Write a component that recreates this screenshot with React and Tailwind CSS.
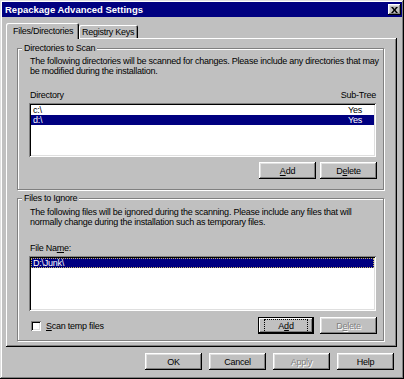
import React from "react";

const raised =
  "shadow-[inset_-1px_-1px_0_#000,inset_1px_1px_0_#fff,inset_-2px_-2px_0_#808080,inset_2px_2px_0_#dfdfdf]";

function Button({ children, disabled, isDefault }) {
  return (
    <div
      className={
        isDefault
          ? "w-[56px] h-[17px] flex items-center justify-center bg-[#c0c0c0] border border-black shadow-[inset_-1px_-1px_0_#000,inset_1px_1px_0_#fff,inset_-2px_-2px_0_#808080]"
          : "w-[57px] h-[17px] flex items-center justify-center bg-[#c0c0c0] shadow-[inset_-1px_-1px_0_#000,inset_1px_1px_0_#fff,inset_-2px_-2px_0_#808080,inset_2px_2px_0_#dfdfdf]"
      }
    >
      <span
        className={
          disabled
            ? "text-[#808080] [text-shadow:1px_1px_0_#fff] leading-[10px]"
            : isDefault
            ? "leading-[10px] outline outline-1 outline-dotted outline-black outline-offset-[1px] px-[12px]"
            : "leading-[10px]"
        }
      >
        {children}
      </span>
    </div>
  );
}

function GroupBox({ label, className, children }) {
  return (
    <div
      className={
        "relative ml-[11px] w-[367px] border border-[#808080] shadow-[inset_1px_1px_0_#fff,1px_1px_0_#fff] pl-[12px] " +
        className
      }
    >
      <span className="absolute -top-[6px] left-[4px] bg-[#c0c0c0] px-[2px] leading-[10px] whitespace-nowrap">{label}</span>
      {children}
    </div>
  );
}

export default function App() {
  return (
    <div className="w-[404px] h-[379px] bg-[#c0c0c0] p-[2px] flex flex-col text-[9px] tracking-[-0.25px] text-black font-['Liberation_Sans',Arial,sans-serif] shadow-[inset_-1px_-1px_0_#000,inset_1px_1px_0_#dfdfdf,inset_-2px_-2px_0_#808080,inset_2px_2px_0_#fff]">
      {/* title bar */}
      <div className="h-[15px] bg-[#000080] flex items-center justify-between pl-[3px] pr-[1px]">
        <span className="text-white font-bold text-[9.5px] tracking-normal leading-[12px]">
          Repackage Advanced Settings
        </span>
        <div className={"w-[13px] h-[11px] bg-[#c0c0c0] flex items-center justify-center " + raised}>
          <svg width="7" height="6" viewBox="0 0 7 6">
            <path d="M0 0h2l1.5 2L5 0h2L4.5 3 7 6H5L3.5 4 2 6H0l2.5-3z" fill="#000" />
          </svg>
        </div>
      </div>

      {/* tabs */}
      <div className="mt-[6px] ml-[4px] h-[15px] flex items-end whitespace-nowrap">
        <div className="relative z-10 -mb-px h-[16px] w-[73px] bg-[#c0c0c0] pl-[7px] pt-[3px] leading-[10px] rounded-t-[2px] shadow-[inset_1px_1px_0_#fff,inset_-1px_0_0_#000,inset_-2px_0_0_#808080]">
          Files/Directories
        </div>
        <div className="h-[13px] w-[59px] bg-[#c0c0c0] pl-[3px] pt-[2px] leading-[10px] rounded-t-[2px] shadow-[inset_1px_1px_0_#fff,inset_-1px_0_0_#000,inset_-2px_0_0_#808080]">
          Registry Keys
        </div>
      </div>

      {/* panel */}
      <div className="ml-[4px] w-[391px] h-[309px] flex flex-col shadow-[inset_-1px_-1px_0_#000,inset_1px_1px_0_#fff,inset_-2px_-2px_0_#808080]">
        <GroupBox label="Directories to Scan" className="mt-[10px] h-[142px]">
          <div className="pt-[7px] leading-[10px] whitespace-nowrap">
            The following directories will be scanned for changes. Please include any directories that may
            <br />
            be modified during the installation.
          </div>
          <div className="mt-[14px] w-[346px] flex justify-between leading-[10px]">
            <span>Directory</span>
            <span>Sub-Tree</span>
          </div>
          <div className="mt-[3px] -ml-px w-[347px] h-[54px] bg-white p-[2px] shadow-[inset_1px_1px_0_#808080,inset_-1px_-1px_0_#fff,inset_2px_2px_0_#000,inset_-2px_-2px_0_#dfdfdf]">
            <div className="h-[10px] leading-[10px] flex justify-between pl-[2px] pr-[12px]">
              <span>c:\</span>
              <span>Yes</span>
            </div>
            <div className="h-[10px] leading-[10px] flex justify-between pl-[2px] pr-[12px] bg-[#000080] text-white">
              <span>d:\</span>
              <span>Yes</span>
            </div>
          </div>
          <div className="mt-[5px] w-[347px] flex justify-end gap-[4px]">
            <Button>
              <u>A</u>dd
            </Button>
            <Button>
              D<u>e</u>lete
            </Button>
          </div>
        </GroupBox>

        <GroupBox label="Files to Ignore" className="mt-[8px] h-[143px]">
          <div className="pt-[8px] leading-[10px] whitespace-nowrap">
            The following files will be ignored during the scanning. Please include any files that will
            <br />
            normally change during the installation such as temporary files.
          </div>
          <div className="mt-[16px] leading-[10px]">
            File Na<u>m</u>e:
          </div>
          <div className="mt-[3px] -ml-px w-[347px] h-[55px] bg-white p-[2px] shadow-[inset_1px_1px_0_#808080,inset_-1px_-1px_0_#fff,inset_2px_2px_0_#000,inset_-2px_-2px_0_#dfdfdf]">
            <div className="h-[10px] leading-[10px] pl-[2px] bg-[#000080] text-white outline outline-1 outline-dotted outline-[#c8b860] -outline-offset-1">
              D:\Junk\
            </div>
          </div>
          <div className="mt-[6px] w-[347px] flex items-center justify-between">
            <div className="flex items-center gap-[5px] pl-px">
              <div className="w-[10px] h-[10px] bg-white shadow-[inset_1px_1px_0_#808080,inset_-1px_-1px_0_#fff,inset_2px_2px_0_#000,inset_-2px_-2px_0_#dfdfdf]" />
              <span className="leading-[10px]">
                <u>S</u>can temp files
              </span>
            </div>
            <div className="flex gap-[6px]">
              <Button isDefault>
                A<u>d</u>d
              </Button>
              <Button disabled>
                D<u>e</u>lete
              </Button>
            </div>
          </div>
        </GroupBox>
      </div>

      {/* dialog buttons */}
      <div className="mt-[6px] ml-[143px] flex gap-[7px]">
        <Button>OK</Button>
        <Button>Cancel</Button>
        <Button disabled>Apply</Button>
        <Button>Help</Button>
      </div>
    </div>
  );
}
